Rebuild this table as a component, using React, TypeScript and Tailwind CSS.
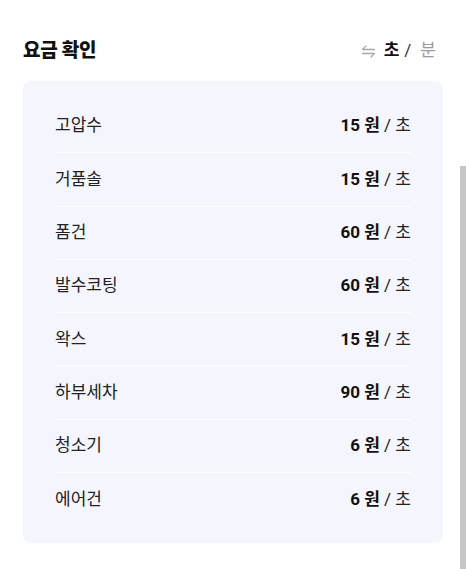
const rates = [
  { name: "고압수", price: 15 },
  { name: "거품솔", price: 15 },
  { name: "폼건", price: 60 },
  { name: "발수코팅", price: 60 },
  { name: "왁스", price: 15 },
  { name: "하부세차", price: 90 },
  { name: "청소기", price: 6 },
  { name: "에어건", price: 6 },
];

function SwapIcon() {
  return (
    <svg width="15" height="14" viewBox="0 0 15 14" fill="none" stroke="#a8a8a8" strokeWidth="1.3" strokeLinecap="round">
      <path d="M1.5 5.5 H13.5 M1.5 5.5 L5 2" />
      <path d="M1.5 9.5 H13.5 M13.5 9.5 L10 13" />
    </svg>
  );
}

export default function App() {
  return (
    <div
      className="relative w-[466px] h-[569px] bg-white overflow-hidden"
      style={{ fontFamily: "Roboto, 'Noto Sans CJK KR', sans-serif" }}
    >
      <div className="px-[23px] pt-[39px]">
        <div className="flex items-center justify-between h-[24px] pr-[7px]">
          <h2 className="text-[19px] font-extrabold text-[#111] tracking-[-0.3px]">요금 확인</h2>
          <div className="flex items-center text-[17px]">
            <SwapIcon />
            <span className="font-bold text-[#111] ml-[8px]">초</span>
            <span className="text-[#333] ml-[5px]">/</span>
            <span className="text-[#9a9a9a] ml-[9px]">분</span>
          </div>
        </div>

        <div className="mt-[18px] w-[420px] rounded-[8px] bg-[#f5f6fd] px-[32px] pt-[19px] pb-[17px]">
          {rates.map((r, i) => (
            <div
              key={r.name}
              className={`flex items-center justify-between h-[53.3px] ${i < rates.length - 1 ? "border-b border-white" : ""}`}
            >
              <span className="text-[17px] text-[#222]">{r.name}</span>
              <span className="text-[17px] text-[#222]">
                <span className="font-bold text-[#111]">{r.price} 원</span> / 초
              </span>
            </div>
          ))}
        </div>
      </div>

      <div className="absolute right-0 top-[166px] bottom-0 w-[6px] bg-[#c6c6c6]" />
    </div>
  );
}
